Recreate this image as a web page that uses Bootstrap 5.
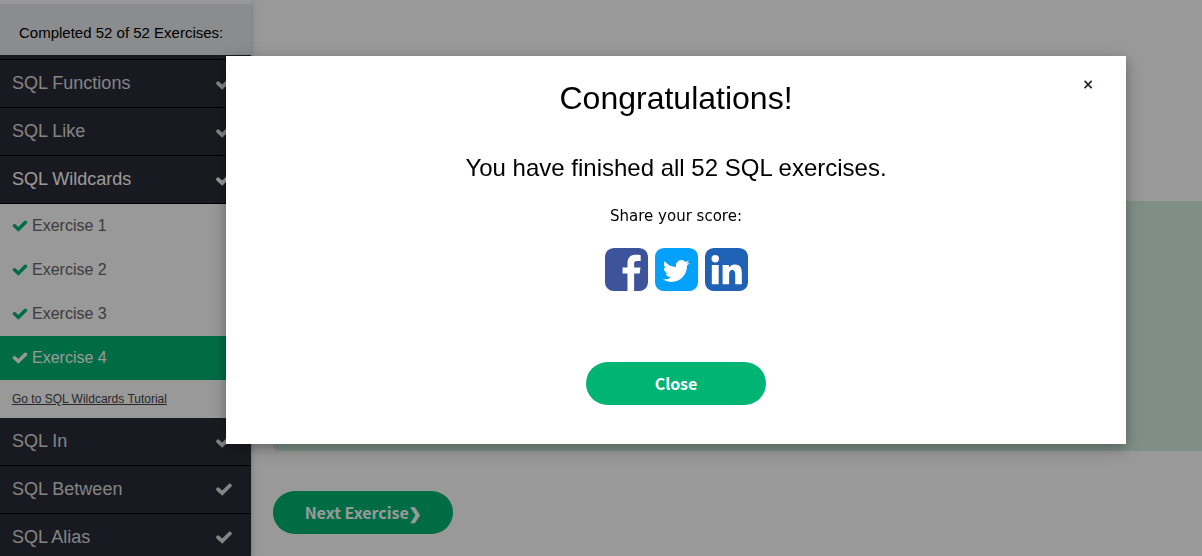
<!DOCTYPE html>
<html lang="en">
<head>
<meta charset="utf-8">
<meta name="viewport" content="width=device-width, initial-scale=1">
<title>SQL Exercises</title>
<link href="https://cdn.jsdelivr.net/npm/bootstrap@5.3.0/dist/css/bootstrap.min.css" rel="stylesheet">
<style>
  :root { --ex-green: #00b473; --ex-dark: #2b2b37; }
  body { font-family: Verdana, "DejaVu Sans", sans-serif; font-size: 15px; color: #000; }
  .side-menu { width: 251px; font-family: "Liberation Sans", Arial, sans-serif; background: var(--ex-dark); z-index: 1;
    box-shadow: 0 2px 5px rgba(0,0,0,.16), 0 2px 10px rgba(0,0,0,.12); }
  .score-head { height: 55px; border-top: 4px solid #fff; background: #e7e9eb; padding: 8px 19px 0; }
  .menu-tail { height: 5px; border-bottom: 1px solid #000; }
  .menu-topic { height: 48px; padding: 0 19px 0 12px; font-size: 18px; color: #ddd; border-bottom: 1px solid #000; }
  .menu-topic.current { color: #fff; }
  .exercise { height: 44px; padding-left: 12px; gap: 4px; font-size: 16px; color: #666; background: #fff; }
  .exercise svg { color: var(--ex-green); }
  .exercise.current { background: var(--ex-green); color: #fff; }
  .exercise.current svg { color: #fff; }
  .tutorial { height: 38px; padding-left: 12px; font-size: 12px; background: #fff; }
  .tutorial a { color: #444; }
  .main-pane { padding: 201px 0 0 22px; }
  .question { height: 250px; border-radius: 5px 0 0 5px; background: #d4efe3; }
  .pill { width: 180px; height: 43px; padding: 0 0 2px; border: 0; border-radius: 25px; line-height: 24px;
    font-family: "Source Sans Pro", "Noto Sans CJK SC", sans-serif; font-size: 16px; font-weight: 700; }
  .pill, .pill:hover { background: var(--ex-green); color: #fff; }
  .pill .chevron { font-family: "DejaVu Sans", sans-serif; font-size: 15px; line-height: 1; -webkit-text-stroke: 1px currentColor; }
  .finish { padding: 56px 0 0 150px; background: rgba(0,0,0,.4); }
  .finish .modal-dialog { max-width: 900px; margin: 0 auto; }
  .finish .modal-content { padding: 18px 24px 39px; color: #000;
    box-shadow: 0 4px 10px rgba(0,0,0,.2), 0 4px 20px rgba(0,0,0,.19); }
  .finish h1, .finish h2 { font-family: "Liberation Sans", Arial, sans-serif; font-weight: 400; margin: 0; }
  .finish h1 { font-size: 32px; line-height: 48px; }
  .finish h2 { font-size: 24px; line-height: 36px; margin: 28px 0 18px; }
  .finish p { line-height: 24px; margin: 0 0 20px; }
  .share { gap: 7px; margin-bottom: 71px; }
  .share a, .share svg { display: block; }
  .dismiss { top: 16px; right: 30px; width: 16px; height: 24px; line-height: 24px; font-size: 14px; font-weight: 700; }
</style>
</head>
<body>
<svg class="d-none">
  <symbol id="tick" viewBox="0 0 16 13"><path fill="none" stroke="currentColor" stroke-width="3.800" stroke-linecap="round" d="M2.100 6.300 6.200 10.200 13.900 2.500"/></symbol>
</svg>
<div class="d-flex vh-100 overflow-hidden">
  <nav class="side-menu flex-shrink-0" aria-label="Exercises">
    <div class="score-head d-flex align-items-center text-nowrap">Completed 52 of 52 Exercises:</div>
    <div class="menu-tail"></div>
    <a href="#" class="menu-topic d-flex align-items-center justify-content-between text-decoration-none">SQL Functions <svg width="16" height="13"><use href="#tick"/></svg></a>
    <a href="#" class="menu-topic d-flex align-items-center justify-content-between text-decoration-none">SQL Like <svg width="16" height="13"><use href="#tick"/></svg></a>
    <a href="#" class="menu-topic current d-flex align-items-center justify-content-between text-decoration-none">SQL Wildcards <svg width="16" height="13"><use href="#tick"/></svg></a>
    <a href="#" class="exercise d-flex align-items-center text-decoration-none"><svg width="16" height="12"><use href="#tick"/></svg>Exercise 1</a>
    <a href="#" class="exercise d-flex align-items-center text-decoration-none"><svg width="16" height="12"><use href="#tick"/></svg>Exercise 2</a>
    <a href="#" class="exercise d-flex align-items-center text-decoration-none"><svg width="16" height="12"><use href="#tick"/></svg>Exercise 3</a>
    <a href="#" class="exercise current d-flex align-items-center text-decoration-none"><svg width="16" height="12"><use href="#tick"/></svg>Exercise 4</a>
    <div class="tutorial d-flex align-items-center"><a href="#">Go to SQL Wildcards Tutorial</a></div>
    <a href="#" class="menu-topic d-flex align-items-center justify-content-between text-decoration-none">SQL In <svg width="16" height="13"><use href="#tick"/></svg></a>
    <a href="#" class="menu-topic d-flex align-items-center justify-content-between text-decoration-none">SQL Between <svg width="16" height="13"><use href="#tick"/></svg></a>
    <a href="#" class="menu-topic d-flex align-items-center justify-content-between text-decoration-none">SQL Alias <svg width="16" height="13"><use href="#tick"/></svg></a>
  </nav>
  <main class="main-pane flex-grow-1">
    <div class="question mb-4"></div>
    <button type="button" class="btn pill mt-3">Next Exercise<span class="chevron">❯</span></button>
  </main>
</div>

<div class="modal finish d-block" role="dialog" aria-labelledby="finish-title">
  <div class="modal-dialog">
    <div class="modal-content rounded-0 border-0 align-items-center text-center">
      <button type="button" class="dismiss btn border-0 p-0 position-absolute" aria-label="Dismiss">×</button>
      <h1 id="finish-title">Congratulations!</h1>
      <h2>You have finished all 52 SQL exercises.</h2>
      <p>Share your score:</p>
      <div class="share d-flex">
        <a href="#" aria-label="Facebook"><svg width="43" height="43" viewBox="0 0 44 44"><rect width="44" height="44" rx="9" fill="#3d549c"/><path fill="#fff" d="M23 44V26h-5v-6h5v-4.300C23 9.600 26.400 7 31.500 7c2.200 0 4.300.2 5 .3v5.900H33c-2.700 0-3.200 1.300-3.200 3.200V20h6.500l-.8 6h-5.700v18z"/></svg></a>
        <a href="#" aria-label="Twitter"><svg width="43" height="43" viewBox="0 0 44 44"><rect width="44" height="44" rx="9" fill="#03a1fb"/><path fill="#fff" transform="translate(8 9) scale(1.720)" d="M5.026 15c6.038 0 9.341-5.003 9.341-9.334 0-.14 0-.282-.006-.422A6.685 6.685 0 0 0 16 3.542a6.658 6.658 0 0 1-1.889.518 3.301 3.301 0 0 0 1.447-1.817 6.533 6.533 0 0 1-2.087.793A3.286 3.286 0 0 0 7.875 6.030a9.325 9.325 0 0 1-6.767-3.429 3.289 3.289 0 0 0 1.018 4.382A3.323 3.323 0 0 1 .64 6.575v.045a3.288 3.288 0 0 0 2.632 3.218 3.203 3.203 0 0 1-.865.115 3.230 3.230 0 0 1-.614-.057 3.283 3.283 0 0 0 3.067 2.277A6.588 6.588 0 0 1 .780 13.580a6.320 6.320 0 0 1-.780-.045A9.344 9.344 0 0 0 5.026 15z"/></svg></a>
        <a href="#" aria-label="LinkedIn"><svg width="43" height="43" viewBox="0 0 44 44"><rect width="44" height="44" rx="9" fill="#1f61b5"/><g fill="#fff"><circle cx="10.500" cy="11" r="3.800"/><path d="M7 17.500h7V37H7zM18 17.500h6.500v2.700c1-1.800 3.100-3.200 6-3.200 6 0 7.200 4 7.200 9.300V37h-6.800v-9.500c0-2.500-.3-5-3-5-2.700 0-3.200 2.300-3.200 4.800V37H18z"/></g></svg></a>
      </div>
      <button type="button" class="btn pill">Close</button>
    </div>
  </div>
</div>
<script src="https://cdn.jsdelivr.net/npm/bootstrap@5.3.0/dist/js/bootstrap.bundle.min.js"></script>
</body>
</html>
